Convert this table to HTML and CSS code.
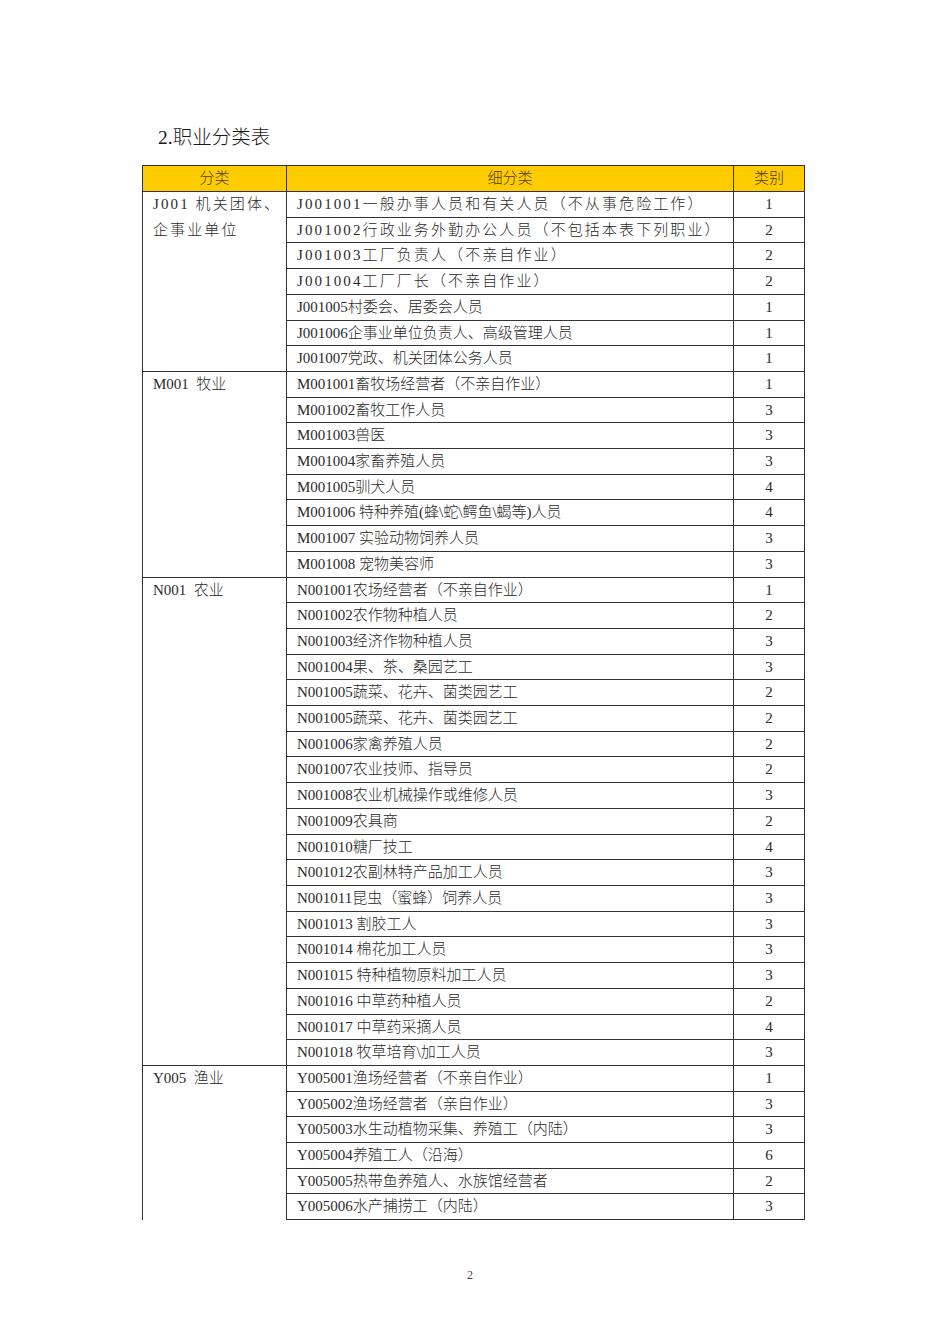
FILE: index.html
```html
<!DOCTYPE html>
<html lang="zh-CN">
<head>
<meta charset="utf-8">
<title>职业分类表</title>
<link rel="stylesheet" href="styles.css">
</head>
<body>
<div class="page">
  <h1 class="title">2.职业分类表</h1>
  <table class="tbl">
    <colgroup><col class="w1"><col class="w2"><col class="w3"></colgroup>
    <thead>
      <tr class="head"><th>分类</th><th>细分类</th><th>类别</th></tr>
    </thead>
    <tbody>
      <tr><td class="c1 sp" rowspan="7">J001 机关团体、企事业单位</td><td class="c2 sp">J001001一般办事人员和有关人员（不从事危险工作）</td><td class="c3">1</td></tr>
      <tr><td class="c2 sp">J001002行政业务外勤办公人员（不包括本表下列职业）</td><td class="c3">2</td></tr>
      <tr><td class="c2 sp">J001003工厂负责人（不亲自作业）</td><td class="c3">2</td></tr>
      <tr><td class="c2 sp">J001004工厂厂长（不亲自作业）</td><td class="c3">2</td></tr>
      <tr><td class="c2">J001005村委会、居委会人员</td><td class="c3">1</td></tr>
      <tr><td class="c2">J001006企事业单位负责人、高级管理人员</td><td class="c3">1</td></tr>
      <tr><td class="c2">J001007党政、机关团体公务人员</td><td class="c3">1</td></tr>

      <tr><td class="c1" rowspan="8">M001&nbsp;&nbsp;牧业</td><td class="c2">M001001畜牧场经营者（不亲自作业）</td><td class="c3">1</td></tr>
      <tr><td class="c2">M001002畜牧工作人员</td><td class="c3">3</td></tr>
      <tr><td class="c2">M001003兽医</td><td class="c3">3</td></tr>
      <tr><td class="c2">M001004家畜养殖人员</td><td class="c3">3</td></tr>
      <tr><td class="c2">M001005驯犬人员</td><td class="c3">4</td></tr>
      <tr><td class="c2">M001006 特种养殖(蜂\蛇\鳄鱼\蝎等)人员</td><td class="c3">4</td></tr>
      <tr><td class="c2">M001007 实验动物饲养人员</td><td class="c3">3</td></tr>
      <tr><td class="c2">M001008 宠物美容师</td><td class="c3">3</td></tr>

      <tr><td class="c1" rowspan="19">N001&nbsp;&nbsp;农业</td><td class="c2">N001001农场经营者（不亲自作业）</td><td class="c3">1</td></tr>
      <tr><td class="c2">N001002农作物种植人员</td><td class="c3">2</td></tr>
      <tr><td class="c2">N001003经济作物种植人员</td><td class="c3">3</td></tr>
      <tr><td class="c2">N001004果、茶、桑园艺工</td><td class="c3">3</td></tr>
      <tr><td class="c2">N001005蔬菜、花卉、菌类园艺工</td><td class="c3">2</td></tr>
      <tr><td class="c2">N001005蔬菜、花卉、菌类园艺工</td><td class="c3">2</td></tr>
      <tr><td class="c2">N001006家禽养殖人员</td><td class="c3">2</td></tr>
      <tr><td class="c2">N001007农业技师、指导员</td><td class="c3">2</td></tr>
      <tr><td class="c2">N001008农业机械操作或维修人员</td><td class="c3">3</td></tr>
      <tr><td class="c2">N001009农具商</td><td class="c3">2</td></tr>
      <tr><td class="c2">N001010糖厂技工</td><td class="c3">4</td></tr>
      <tr><td class="c2">N001012农副林特产品加工人员</td><td class="c3">3</td></tr>
      <tr><td class="c2">N001011昆虫（蜜蜂）饲养人员</td><td class="c3">3</td></tr>
      <tr><td class="c2">N001013 割胶工人</td><td class="c3">3</td></tr>
      <tr><td class="c2">N001014 棉花加工人员</td><td class="c3">3</td></tr>
      <tr><td class="c2">N001015 特种植物原料加工人员</td><td class="c3">3</td></tr>
      <tr><td class="c2">N001016 中草药种植人员</td><td class="c3">2</td></tr>
      <tr><td class="c2">N001017 中草药采摘人员</td><td class="c3">4</td></tr>
      <tr><td class="c2">N001018 牧草培育\加工人员</td><td class="c3">3</td></tr>

      <tr><td class="c1 open" rowspan="6">Y005&nbsp;&nbsp;渔业</td><td class="c2">Y005001渔场经营者（不亲自作业）</td><td class="c3">1</td></tr>
      <tr><td class="c2">Y005002渔场经营者（亲自作业）</td><td class="c3">3</td></tr>
      <tr><td class="c2">Y005003水生动植物采集、养殖工（内陆）</td><td class="c3">3</td></tr>
      <tr><td class="c2">Y005004养殖工人（沿海）</td><td class="c3">6</td></tr>
      <tr><td class="c2">Y005005热带鱼养殖人、水族馆经营者</td><td class="c3">2</td></tr>
      <tr><td class="c2">Y005006水产捕捞工（内陆）</td><td class="c3">3</td></tr>
    </tbody>
  </table>
  <div class="pageno">2</div>
</div>
</body>
</html>
```

FILE: styles.css
```css
html, body {
  margin: 0;
  padding: 0;
  background: #ffffff;
}

body {
  font-family: "Liberation Serif", "Noto Sans CJK SC", serif;
  color: #2a2a2a;
}

.page {
  width: 950px;
  height: 1344px;
  padding-top: 126px;
  box-sizing: border-box;
}

.title {
  margin: 0 0 15px 158px;
  height: 24px;
  line-height: 24px;
  font-size: 19.5px;
  font-weight: 300;
  color: #1a1a1a;
}

.tbl {
  margin-left: 142px;
  width: 662px;
  table-layout: fixed;
  border-collapse: collapse;
  font-size: 15px;
  font-weight: 300;
}

.w1 { width: 144px; }
.w2 { width: 447px; }
.w3 { width: 71px; }

.tbl th,
.tbl td {
  border: 1px solid #333333;
  padding: 0;
  line-height: 24.7px;
  white-space: nowrap;
}

.head th {
  line-height: 25px;
  background: #ffcc00;
  font-weight: 300;
  text-align: center;
  color: #4d3d10;
}

.c1 {
  vertical-align: top;
  padding-left: 10px !important;
  line-height: 25.7px !important;
  white-space: normal !important;
  word-break: break-all;
}

.c2 {
  padding-left: 10px !important;
}

.c3 {
  text-align: center;
}

.sp {
  letter-spacing: 2.1px;
}

.open {
  border-bottom: none !important;
}

.pageno {
  margin-top: 47px;
  padding-right: 10px;
  text-align: center;
  font-size: 12px;
  line-height: 16px;
  color: #444444;
}
```
